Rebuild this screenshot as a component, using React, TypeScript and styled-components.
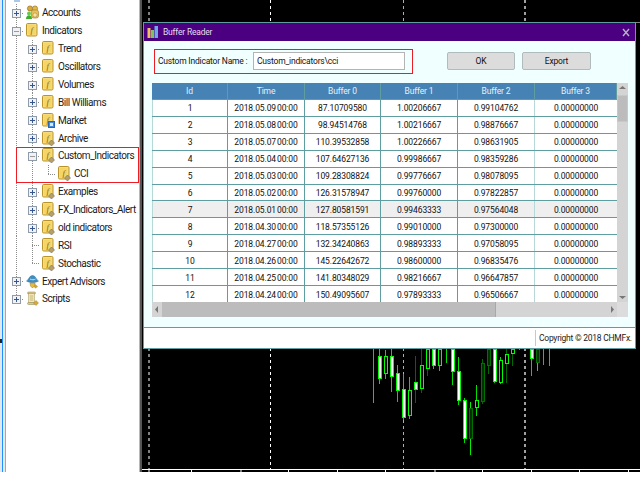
import React from "react";
import styled, { createGlobalStyle } from "styled-components";

const Global = createGlobalStyle`
  html, body { margin: 0; padding: 0; background: #fff; }
  body { font-family: Roboto, "Liberation Sans", sans-serif; width: 640px; height: 480px; overflow: hidden; }
`;

const Screen = styled.div`
  width: 640px;
  height: 472px;
  display: flex;
  background: #fff;
`;

const Gutter = styled.div`
  position: relative;
  width: 6px;
  flex: none;
  box-sizing: border-box;
  background: linear-gradient(90deg, #e4e8ec 0 2px, #1e90ff 2px 3px, #e8e8e8 3px 5px, #a8a8a8 5px 6px);
`;

const GutterMark = styled.span`
  position: absolute;
  left: 0;
  top: 339px;
  width: 2px;
  height: 4px;
  background: #222;
`;

const TreePanel = styled.div`
  width: 133px;
  flex: none;
  padding-top: 4px;
  box-sizing: border-box;
  position: relative;
  background: #fff;
`;

const TopClip = styled.span`
  position: absolute;
  left: 8px;
  top: 0;
  width: 6px;
  height: 2px;
  background: #a9c8ea;
`;

const Row = styled.div`
  height: 17.875px;
  display: flex;
  align-items: center;
  padding-left: 2px;
`;

const RowCell = styled.svg`
  width: 16px;
  height: 17.875px;
  flex: none;
  display: block;
`;

const IconSlot = styled.svg`
  width: 13px;
  height: 15px;
  flex: none;
  margin: 0 3px 0 2px;
  display: block;
`;

const Label = styled.span`
  font-size: 10px;
  letter-spacing: -0.45px;
  color: #1a1a1a;
  white-space: nowrap;
  line-height: 14px;
  margin-top: 1px;
`;

const Highlight = styled.div`
  position: relative;
  &::after {
    content: "";
    position: absolute;
    left: 10px;
    right: 0;
    top: 0;
    bottom: 0;
    border: 1px solid #ee1c25;
    pointer-events: none;
  }
`;

const Divider = styled.div`
  width: 3px;
  flex: none;
  background: linear-gradient(90deg, #b8b8b8 0 1px, #555 1px 3px);
`;

const Chart = styled.div`
  position: relative;
  flex: 1;
  background: #000;
`;

const ChartSvg = styled.svg`
  display: block;
  width: 498px;
  height: 472px;
`;

const Dialog = styled.div`
  position: absolute;
  left: 1px;
  top: 22px;
  width: 493px;
  height: 327px;
  box-sizing: border-box;
  border: 1px solid #5f9ea0;
  display: flex;
  flex-direction: column;
  background: #f0ffff;
`;

const TitleBar = styled.div`
  height: 18px;
  flex: none;
  background: #4b0082;
  display: flex;
  align-items: center;
  padding: 0 4px 0 3px;
  gap: 4px;
`;

const TitleText = styled.span`
  flex: 1;
  font-size: 8.5px;
  letter-spacing: -0.2px;
  color: #e4dcf0;
`;

const CloseMark = styled.svg`
  width: 8px;
  height: 9px;
  display: block;
  margin-right: 1px;
`;

const Body = styled.div`
  flex: 1;
  display: flex;
  flex-direction: column;
  background: #f0ffff;
`;

const TopControls = styled.div`
  display: flex;
  align-items: flex-start;
  padding: 8px 0 0 10px;
  height: 34px;
  box-sizing: border-box;
`;

const NameGroup = styled.div`
  width: 259px;
  height: 25px;
  box-sizing: border-box;
  border: 1px solid #ee1c25;
  display: flex;
  align-items: center;
  padding: 0 7px 1px 3px;
  justify-content: space-between;
`;

const NameLabel = styled.span`
  font-size: 8.5px;
  letter-spacing: -0.2px;
  color: #111;
  white-space: nowrap;
`;

const NameInput = styled.div`
  width: 152px;
  height: 18px;
  box-sizing: border-box;
  background: #fff;
  border: 1px solid #b4b4b4;
  font-size: 8.5px;
  letter-spacing: -0.2px;
  color: #111;
  line-height: 17px;
  padding-left: 3px;
  white-space: nowrap;
`;

const ActionButton = styled.div<{ $left: number; $w: number }>`
  margin-left: ${(p) => p.$left}px;
  margin-top: 3px;
  width: ${(p) => p.$w}px;
  height: 18px;
  box-sizing: border-box;
  background: #dcdcdc;
  border: 1px solid #b0bcbc;
  border-radius: 2px;
  font-size: 8.5px;
  letter-spacing: -0.2px;
  line-height: 17px;
  text-align: center;
  color: #111;
`;

const GridArea = styled.div`
  margin: 8px 0 0 8px;
  width: 476px;
  height: 234px;
  display: grid;
  grid-template-columns: 465px 11px;
  grid-template-rows: 219px 15px;
`;

const TableBox = styled.div`
  display: flex;
  flex-direction: column;
  background: #fff;
`;

const cols = "76px 77px 76px 77px 77px 82px";

const HeadRow = styled.div`
  display: grid;
  grid-template-columns: ${cols};
  height: 16px;
  flex: none;
  background: #4682b4;
`;

const HeadCell = styled.div`
  font-size: 8.5px;
  letter-spacing: -0.15px;
  line-height: 17px;
  text-align: center;
  color: #e8f0f8;
  box-sizing: border-box;
  border-right: 1px solid #5f9ea0;
`;

const BodyRows = styled.div`
  flex: 1;
  display: grid;
  grid-template-rows: repeat(12, 1fr);
`;

const DataRow = styled.div<{ $selected?: boolean }>`
  display: grid;
  grid-template-columns: ${cols};
  background: ${(p) => (p.$selected ? "#efefef" : "#fff")};
  border-top: 1px solid #5f9ea0;
  box-sizing: border-box;
  min-height: 0;
`;

const DataCell = styled.div<{ $soft?: boolean; $first?: boolean }>`
  font-size: 8.5px;
  letter-spacing: -0.1px;
  word-spacing: -1px;
  padding-top: 1px;
  display: flex;
  align-items: center;
  justify-content: center;
  color: #111;
  box-sizing: border-box;
  border-right: 1px solid ${(p) => (p.$soft ? "#b8d8d8" : "#5f9ea0")};
  border-left: ${(p) => (p.$first ? "1px solid #b8d8d8" : "0")};
  white-space: pre;
  &:last-child { border-right: 0; }
`;

const VScroll = styled.div`
  background: #d4d4d4;
  display: flex;
  flex-direction: column;
  align-items: stretch;
`;

const VThumb = styled.div`
  margin-top: 2px;
  height: 27px;
  background: #bcbcbc;
  border: 1px solid #c8c8c8;
  box-sizing: border-box;
`;

const ScrollArrow = styled.svg`
  display: block;
  flex: none;
`;

const VFill = styled.div`
  flex: 1;
`;

const HScroll = styled.div`
  background: #d4d4d4;
  display: flex;
  align-items: stretch;
`;

const HThumb = styled.div`
  width: 334px;
  background: #bcbcbc;
  box-sizing: border-box;
  border-right: 1px solid #a8a8a8;
`;

const Corner = styled.div`
  background: #dcdcdc;
`;

const Footer = styled.div`
  height: 21px;
  flex: none;
  margin-top: 10px;
  box-sizing: border-box;
  background: #fff;
  border-top: 1px solid #5f9ea0;
  display: flex;
  justify-content: flex-end;
  align-items: center;
`;

const Copyright = styled.div`
  width: 100px;
  height: 16px;
  box-sizing: border-box;
  border-left: 1px solid #c8c8c8;
  padding-left: 3px;
  font-size: 8.5px;
  letter-spacing: -0.25px;
  line-height: 17px;
  color: #222;
  white-space: nowrap;
`;

type Conn = "none" | "line" | "tee" | "elbow" | "plus" | "minus" | "plusEnd";

function Cell({ kind }: { kind: Conn }) {
  const dot = { stroke: "#8a8a8a", strokeWidth: 1, strokeDasharray: "1 1", shapeRendering: "crispEdges" as const };
  return (
    <RowCell viewBox="0 0 16 18">
      {(kind === "line" || kind === "tee" || kind === "plus" || kind === "minus") && <line x1="8.5" y1="0" x2="8.5" y2="18" {...dot} />}
      {(kind === "elbow" || kind === "plusEnd") && <line x1="8.5" y1="0" x2="8.5" y2="9" {...dot} />}
      {(kind === "tee" || kind === "elbow" || kind === "plus" || kind === "minus" || kind === "plusEnd") && (
        <line x1="8.5" y1="9.5" x2="16" y2="9.5" {...dot} />
      )}
      {(kind === "plus" || kind === "minus" || kind === "plusEnd") && (
        <g shapeRendering="crispEdges">
          <rect x="4.5" y="5.5" width="8" height="8" fill="#f2f2f4" stroke="#8f9aa8" />
          <line x1="6" y1="9.5" x2="11" y2="9.5" stroke={kind === "minus" ? "#9a9a9a" : "#33558f"} />
          {kind !== "minus" && <line x1="8.5" y1="7" x2="8.5" y2="12" stroke="#33558f" />}
        </g>
      )}
    </RowCell>
  );
}

type Ic = "f" | "gear" | "market" | "accounts" | "expert" | "scripts";

function Icon({ type }: { type: Ic }) {
  if (type === "accounts") {
    return (
      <IconSlot viewBox="0 0 13 15">
        <circle cx="4" cy="3.5" r="2.6" fill="#d9a93a" stroke="#8a6516" strokeWidth="0.6" />
        <circle cx="9" cy="3.5" r="2.6" fill="#e3b84a" stroke="#8a6516" strokeWidth="0.6" />
        <rect x="5.5" y="5" width="7" height="8" rx="2" fill="#e8c35a" stroke="#9c7620" strokeWidth="0.6" />
        <circle cx="9" cy="10" r="2.2" fill="#f2e2a8" stroke="#9c7620" strokeWidth="0.5" />
        <path d="M0 14 C0 9 6 9 6 14 Z" fill="#3fae2a" />
        <circle cx="3" cy="8.5" r="2" fill="#69c94a" />
      </IconSlot>
    );
  }
  if (type === "expert") {
    return (
      <IconSlot viewBox="0 0 13 15">
        <path d="M0.5 7 C3 6 3 1.5 6.5 1.5 C10 1.5 10 6 12.5 7 C9 9 4 9 0.5 7 Z" fill="#3f8fc4" stroke="#2a6d9c" strokeWidth="0.5" />
        <path d="M4 5 C6 6 8 6 9.5 5" fill="none" stroke="#bfe2f5" strokeWidth="1" />
        <path d="M4 9 L9 9 L8.5 12 L6.5 14 L4.5 12 Z" fill="#e6bb45" stroke="#9a7a22" strokeWidth="0.5" />
        <path d="M9 10 L12 12.5 L9.5 14.5 L7.5 12.5 Z" fill="#c9a233" />
      </IconSlot>
    );
  }
  if (type === "scripts") {
    return (
      <IconSlot viewBox="0 0 13 15">
        <rect x="1.5" y="1" width="8" height="2" rx="1" fill="#d8c98c" stroke="#8f8350" strokeWidth="0.5" />
        <rect x="2.5" y="2.5" width="6" height="9.5" fill="#f1e6b4" stroke="#a1945c" strokeWidth="0.5" />
        <path d="M3.8 5H7.2M3.8 7H7.2M3.8 9H7.2" stroke="#b5a566" strokeWidth="0.7" />
        <rect x="1.5" y="11.5" width="8" height="2" rx="1" fill="#d8c98c" stroke="#8f8350" strokeWidth="0.5" />
        <path d="M10 9.5 L12.5 12 L10 14.5 L7.5 12 Z" fill="#d6ab3a" stroke="#8f7020" strokeWidth="0.4" />
      </IconSlot>
    );
  }
  return (
    <IconSlot viewBox="0 0 13 15">
      <rect x="0.5" y="0.5" width="10.5" height="12.5" rx="1.2" fill="#f8dc7c" stroke="#b8952c" />
      <rect x="2" y="2" width="7.5" height="9.5" fill="#f5d568" />
      <text x="5.7" y="10" fontSize="9" fontStyle="italic" fontFamily="Liberation Serif, serif" textAnchor="middle" fill="#8c6a1a">
        f
      </text>
      {type === "gear" && <path d="M9.5 9 L12.5 12 L9.5 15 L6.5 12 Z" fill="#b9a060" stroke="#6f6f6f" strokeWidth="0.6" />}
      {type === "market" && (
        <g shapeRendering="crispEdges">
          <rect x="6.5" y="8" width="6" height="6.5" fill="#3f8ee0" stroke="#2a66b0" />
          <rect x="8" y="10" width="3" height="3" fill="#d7e9fb" />
        </g>
      )}
    </IconSlot>
  );
}

function TreeRow({ cells, icon, label }: { cells: Conn[]; icon: Ic; label: string }) {
  return (
    <Row>
      {cells.map((c, i) => (
        <Cell key={i} kind={c} />
      ))}
      <Icon type={icon} />
      <Label>{label}</Label>
    </Row>
  );
}

const data: [string, string, string, string, string, string][] = [
  ["1", "2018.05.09 00:00", "87.10709580", "1.00206667", "0.99104762", "0.00000000"],
  ["2", "2018.05.08 00:00", "98.94514768", "1.00216667", "0.98876667", "0.00000000"],
  ["3", "2018.05.07 00:00", "110.39532858", "1.00226667", "0.98631905", "0.00000000"],
  ["4", "2018.05.04 00:00", "107.64627136", "0.99986667", "0.98359286", "0.00000000"],
  ["5", "2018.05.03 00:00", "109.28308824", "0.99776667", "0.98078095", "0.00000000"],
  ["6", "2018.05.02 00:00", "126.31578947", "0.99760000", "0.97822857", "0.00000000"],
  ["7", "2018.05.01 00:00", "127.80581591", "0.99463333", "0.97564048", "0.00000000"],
  ["8", "2018.04.30 00:00", "118.57355126", "0.99010000", "0.97300000", "0.00000000"],
  ["9", "2018.04.27 00:00", "132.34240863", "0.98893333", "0.97058095", "0.00000000"],
  ["10", "2018.04.26 00:00", "145.22642672", "0.98600000", "0.96835476", "0.00000000"],
  ["11", "2018.04.25 00:00", "141.80348029", "0.98216667", "0.96647857", "0.00000000"],
  ["12", "2018.04.24 00:00", "150.49095607", "0.97893333", "0.96506667", "0.00000000"],
];

const headers = ["Id", "Time", "Buffer 0", "Buffer 1", "Buffer 2", "Buffer 3"];

// x, wickTop, wickBottom, bodyTop, bodyBottom, kind
type Candle = [number, number, number, number, number, "white" | "hollow" | "dark" | "none"];
const candles: Candle[] = [
  [373.5, 349, 403, 0, 0, "none"],
  [379.5, 349, 384, 356, 378, "white"],
  [385.5, 350, 379, 356, 373, "hollow"],
  [391.5, 349, 392, 356, 376, "white"],
  [397.5, 365, 402, 373, 390, "white"],
  [403.5, 374, 420, 389, 417, "white"],
  [409.5, 377, 419, 390, 415, "hollow"],
  [415.5, 356, 403, 382, 389, "white"],
  [421.5, 349, 393, 365, 388, "hollow"],
  [427.5, 349, 376, 349, 368, "hollow"],
  [433.5, 349, 369, 349, 365, "white"],
  [439.5, 349, 371, 349, 365, "hollow"],
  [446.5, 349, 363, 0, 0, "none"],
  [452.5, 349, 385, 349, 371, "white"],
  [458.5, 357, 405, 371, 400, "white"],
  [464.5, 398, 443, 400, 438, "white"],
  [470.5, 402, 455, 408, 438, "dark"],
  [476.5, 385, 416, 400, 407, "hollow"],
  [482.5, 359, 404, 363, 401, "dark"],
  [488.5, 349, 374, 349, 365, "dark"],
  [494.5, 349, 383, 349, 381, "white"],
  [500.5, 357, 384, 360, 382, "hollow"],
  [506.5, 349, 383, 354, 363, "hollow"],
  [512.5, 349, 366, 349, 353, "hollow"],
  [519.5, 349, 350, 0, 0, "none"],
  [531.5, 349, 376, 349, 358, "white"],
  [537.5, 349, 371, 349, 362, "dark"],
  [543.5, 349, 365, 0, 0, "none"],
  [549.5, 349, 366, 0, 0, "none"],
];

const darkWick = new Set([415.5, 421.5, 427.5, 506.5, 512.5, 488.5, 482.5]);

function ChartDrawing() {
  const ticks = [191, 288, 337, 385, 482, 531, 579, 628];
  const greyTicks = [240, 434];
  return (
    <ChartSvg viewBox="142 0 498 472">
      <line x1="149" y1="0" x2="149" y2="469" stroke="#808080" strokeWidth="2" strokeDasharray="3 3" />
      <line x1="270.5" y1="0" x2="270.5" y2="469" stroke="#ffffff" strokeWidth="1" strokeDasharray="3 3" />
      <line x1="403.5" y1="0" x2="403.5" y2="469" stroke="#b0b0b0" strokeWidth="1" strokeDasharray="3 3" />
      <line x1="525" y1="0" x2="525" y2="469" stroke="#a0a0a0" strokeWidth="2" strokeDasharray="3 3" />
      {candles.map(([x, wt, wb, bt, bb, kind]) => {
        const green = kind === "dark" ? "#007000" : "#00ff00";
        const wick = darkWick.has(x) ? "#006800" : "#00e000";
        return (
          <g key={x} shapeRendering="crispEdges">
            <line x1={x} y1={wt} x2={x} y2={wb} stroke={kind === "dark" && !darkWick.has(x) ? "#00f000" : wick} />
            {kind !== "none" && (
              <rect
                x={x - 1}
                y={bt + 0.5}
                width={3}
                height={bb - bt}
                fill={kind === "white" ? "#ffffff" : kind === "dark" ? "#003000" : "#000000"}
                stroke={green}
              />
            )}
          </g>
        );
      })}
      <line x1="142" y1="469.5" x2="640" y2="469.5" stroke="#fff" shapeRendering="crispEdges" />
      {ticks.map((x) => (
        <line key={x} x1={x + 0.5} y1="470" x2={x + 0.5} y2="472" stroke="#fff" shapeRendering="crispEdges" />
      ))}
      {greyTicks.map((x) => (
        <line key={x} x1={x + 0.5} y1="470" x2={x + 0.5} y2="472" stroke="#808080" strokeWidth="2" shapeRendering="crispEdges" />
      ))}
      <line x1="149" y1="470" x2="149" y2="472" stroke="#808080" strokeWidth="2" />
      <line x1="636" y1="22.5" x2="640" y2="22.5" stroke="#808080" shapeRendering="crispEdges" />
    </ChartSvg>
  );
}

export default function App() {
  return (
    <>
      <Global />
      <Screen>
        <Gutter>
          <GutterMark />
        </Gutter>
        <TreePanel>
          <TopClip />
          <TreeRow cells={["plus"]} icon="accounts" label="Accounts" />
          <TreeRow cells={["minus"]} icon="f" label="Indicators" />
          <TreeRow cells={["line", "plus"]} icon="f" label="Trend" />
          <TreeRow cells={["line", "plus"]} icon="f" label="Oscillators" />
          <TreeRow cells={["line", "plus"]} icon="f" label="Volumes" />
          <TreeRow cells={["line", "plus"]} icon="f" label="Bill Williams" />
          <TreeRow cells={["line", "plus"]} icon="market" label="Market" />
          <TreeRow cells={["line", "plus"]} icon="gear" label="Archive" />
          <Highlight>
            <TreeRow cells={["line", "minus"]} icon="gear" label="Custom_Indicators" />
            <TreeRow cells={["line", "line", "elbow"]} icon="gear" label="CCI" />
          </Highlight>
          <TreeRow cells={["line", "plus"]} icon="gear" label="Examples" />
          <TreeRow cells={["line", "plus"]} icon="gear" label="FX_Indicators_Alert" />
          <TreeRow cells={["line", "plus"]} icon="gear" label="old indicators" />
          <TreeRow cells={["line", "tee"]} icon="gear" label="RSI" />
          <TreeRow cells={["line", "elbow"]} icon="gear" label="Stochastic" />
          <TreeRow cells={["plus"]} icon="expert" label="Expert Advisors" />
          <TreeRow cells={["plusEnd"]} icon="scripts" label="Scripts" />
        </TreePanel>
        <Divider />
        <Chart>
          <ChartDrawing />
          <Dialog>
            <TitleBar>
              <svg width="12" height="14" viewBox="0 0 12 14">
                <rect x="0.5" y="3" width="3" height="10" fill="#f0c060" />
                <rect x="4" y="5" width="3" height="8" fill="#7fc060" />
                <rect x="7.5" y="1" width="3.5" height="12" fill="#6fa8e8" />
              </svg>
              <TitleText>Buffer Reader</TitleText>
              <CloseMark viewBox="0 0 8 9">
                <path d="M1 1 L7 8 M7 1 L1 8" stroke="#b8b0c8" strokeWidth="1.4" />
              </CloseMark>
            </TitleBar>
            <Body>
              <TopControls>
                <NameGroup>
                  <NameLabel>Custom Indicator Name :</NameLabel>
                  <NameInput>Custom_indicators\cci</NameInput>
                </NameGroup>
                <ActionButton $left={34} $w={68}>OK</ActionButton>
                <ActionButton $left={7} $w={69}>Export</ActionButton>
              </TopControls>
              <GridArea>
                <TableBox>
                  <HeadRow>
                    {headers.map((h) => (
                      <HeadCell key={h}>{h}</HeadCell>
                    ))}
                  </HeadRow>
                  <BodyRows>
                    {data.map((r, i) => (
                      <DataRow key={r[0]} $selected={i === 6}>
                        {r.map((c, j) => (
                          <DataCell key={j} $first={j === 0} $soft={j === 4}>
                            {c}
                          </DataCell>
                        ))}
                      </DataRow>
                    ))}
                  </BodyRows>
                </TableBox>
                <VScroll>
                  <ScrollArrow width="11" height="10" viewBox="0 0 11 10">
                    <path d="M2 6 L5.5 3 L9 6 Z" fill="#777" />
                  </ScrollArrow>
                  <VThumb />
                  <VFill />
                  <ScrollArrow width="11" height="10" viewBox="0 0 11 10">
                    <path d="M2 4 L5.5 7 L9 4 Z" fill="#777" />
                  </ScrollArrow>
                </VScroll>
                <HScroll>
                  <ScrollArrow width="10" height="15" viewBox="0 0 10 15">
                    <path d="M6 4 L3 7.5 L6 11 Z" fill="#777" />
                  </ScrollArrow>
                  <HThumb />
                  <VFill />
                  <ScrollArrow width="10" height="15" viewBox="0 0 10 15">
                    <path d="M4 4 L7 7.5 L4 11 Z" fill="#777" />
                  </ScrollArrow>
                </HScroll>
                <Corner />
              </GridArea>
              <Footer>
                <Copyright>Copyright © 2018 CHMFx.</Copyright>
              </Footer>
            </Body>
          </Dialog>
        </Chart>
      </Screen>
    </>
  );
}
